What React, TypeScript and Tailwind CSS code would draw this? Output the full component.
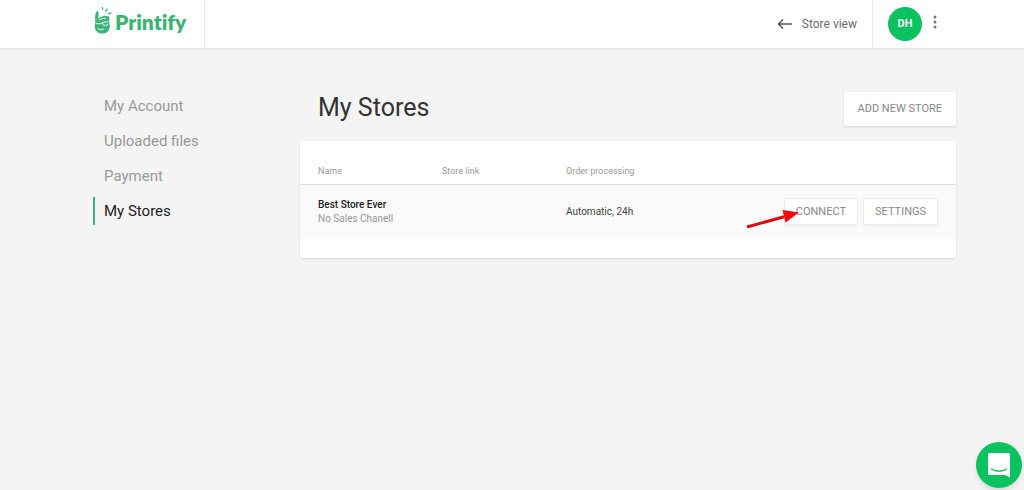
import React from "react";

const navItems = [
  { label: "My Account", active: false },
  { label: "Uploaded files", active: false },
  { label: "Payment", active: false },
  { label: "My Stores", active: true },
];

const stores = [
  { name: "Best Store Ever", channel: "No Sales Chanell", link: "", processing: "Automatic, 24h" },
];

function HandLogo() {
  return (
    <svg viewBox="0 0 18 28" className="h-7 w-[18px] shrink-0" aria-hidden="true">
      <g fill="#39b575">
        <path d="M2.200 6C2.900 4.900 4.600 5.300 4.600 6.700l-.2 5.200-3.300 2C.9 11 1.200 8 2.200 6z" />
        <path d="M1.200 14.600C3.200 12.300 7 10.500 10 9.900c2.800-.5 5.300.4 5.500 2.100.2 1-.3 1.700-.8 2.200 1 .9 1.100 2 .6 3 1.600 5-.8 9.700-6 10.300C4.600 28 1.100 25.200.700 20.800z" />
      </g>
      <g fill="none" stroke="#39b575" strokeWidth="1.200" strokeLinecap="round">
        <path d="M8.200 1.500l.5 2.200M13.200 2.900l-1.700 2.200M17.200 7l-2.600.9" />
      </g>
      <g fill="none" stroke="#fff" strokeWidth="0.900" strokeLinecap="round">
        <path d="M5.500 13.800c2-1.200 3.900-1.700 6-1.500M1.500 16.600c1.800 1.500 3.900 1.700 6 .5 2.200-1 4.500-1.500 6.800-1.200M8.600 16.900c-.5 1.800.6 2.500 2.200 2.500 1.300 0 2.300-.4 3.200-1M4 22.600c1.800 1.300 3.800 1.500 5.600.4" />
      </g>
    </svg>
  );
}

function Header() {
  return (
    <header className="flex h-[49px] border-b border-[#e4e4e4] bg-white pl-[94px] pr-[68px] shadow-xs">
      <a href="#home" className="flex items-center border-r border-[#ececec] pr-[18px] text-[#39b575]">
        <span className="flex items-center gap-[3px] pb-2">
          <HandLogo />
          <span className="pt-1 font-[Lato,sans-serif] text-[21px] leading-6 font-extrabold [font-variant-ligatures:none]">
            Printify
          </span>
        </span>
      </a>
      <div className="ml-auto flex">
        <a href="#store" className="flex items-center gap-[9px] border-r border-[#ececec] pr-[15px] text-xs text-[#6b6b6b]">
          <svg viewBox="0 0 16 12" className="h-3 w-4" fill="none" stroke="#555" strokeWidth="1.500" aria-hidden="true">
            <path d="M15 6H2M6 1.500L1.500 6 6 10.500" />
          </svg>
          Store view
        </a>
        <div className="flex items-center gap-2 pr-4 pl-[15px]">
          <span className="flex size-[34px] items-center justify-center rounded-full bg-[#0ac25f] text-[11px] font-bold text-white">
            DH
          </span>
          <button type="button" aria-label="More options" className="pb-1">
            <svg viewBox="0 0 10 14" className="h-3.5 w-2.5" fill="#777" aria-hidden="true">
              <circle cx="5" cy="2" r="1.500" />
              <circle cx="5" cy="7" r="1.500" />
              <circle cx="5" cy="12" r="1.500" />
            </svg>
          </button>
        </div>
      </div>
    </header>
  );
}

function Sidebar() {
  return (
    <nav className="w-[207px] shrink-0">
      <ul className="flex flex-col gap-[7px]">
        {navItems.map((item) => (
          <li key={item.label}>
            <a
              href="#section"
              aria-current={item.active ? "page" : undefined}
              className={
                item.active
                  ? "block border-l-2 border-[#39b575] pl-[9px] text-[15px] leading-7 text-[#222]"
                  : "block border-l-2 border-transparent pl-[9px] text-[15px] leading-7 text-[#999]"
              }
            >
              {item.label}
            </a>
          </li>
        ))}
      </ul>
    </nav>
  );
}

function PointerArrow() {
  return (
    <svg viewBox="0 0 54 22" className="pointer-events-none absolute top-3 -left-[39px] h-[22px] w-[54px]" aria-hidden="true">
      <path d="M2 17L39 6.800" stroke="#dc0d12" strokeWidth="3" />
      <path d="M37.500 0L54 2.500 40.500 12.500z" fill="#f5080c" />
    </svg>
  );
}

const rowButton =
  "h-[27px] rounded-xs border border-[#ececec] bg-white px-[11px] text-[11px] text-[#888] shadow-xs";

function StoreTable() {
  return (
    <section className="rounded-xs bg-white pb-[19px] shadow-sm">
      <table className="w-full table-fixed text-left">
        <thead>
          <tr className="h-[43px] border-b border-[#dedede] text-[9px] text-[#999]">
            <th className="w-[142px] pt-[18px] pl-[18px] font-normal">Name</th>
            <th className="w-[124px] pt-[18px] font-normal">Store link</th>
            <th className="w-[124px] pt-[18px] font-normal">Order processing</th>
            <th aria-label="Actions" />
          </tr>
        </thead>
        <tbody>
          {stores.map((store) => (
            <tr key={store.name} className="h-[55px] bg-[#fafafa] text-[10px]">
              <td className="pl-[18px] leading-[14px]">
                <div className="font-medium text-[#222]">{store.name}</div>
                <div className="text-[#999]">{store.channel}</div>
              </td>
              <td>{store.link}</td>
              <td className="text-[#444]">{store.processing}</td>
              <td className="pr-[18px]">
                <div className="flex justify-end gap-[5px]">
                  <div className="relative">
                    <button type="button" className={rowButton}>CONNECT</button>
                    <PointerArrow />
                  </div>
                  <button type="button" className={rowButton}>SETTINGS</button>
                </div>
              </td>
            </tr>
          ))}
        </tbody>
      </table>
    </section>
  );
}

export default function App() {
  return (
    <div className="min-h-screen bg-[#f4f4f4] font-[Roboto,sans-serif]">
      <Header />
      <div className="flex pt-[43px] pl-[93px] pr-[68px] pb-11">
        <Sidebar />
        <main className="min-w-0 flex-1">
          <div className="mb-[15px] flex items-start justify-between">
            <h1 className="pl-[18px] text-[25px] leading-8 text-[#333]">My Stores</h1>
            <button type="button" className="h-[34px] rounded-xs bg-white px-3.5 text-[11px] text-[#888] shadow-sm">
              ADD NEW STORE
            </button>
          </div>
          <StoreTable />
        </main>
      </div>
      <button
        type="button"
        aria-label="Open chat"
        className="fixed right-0.5 bottom-0.5 flex size-[46px] items-center justify-center rounded-full bg-[#0ac25f] shadow-md"
      >
        <svg viewBox="0 0 24 26" className="h-[26px] w-6" aria-hidden="true">
          <path d="M2.500 1h19A1.500 1.500 0 0 1 23 2.500V25.500l-5-2.500H2.500A1.500 1.500 0 0 1 1 21.500v-19A1.500 1.500 0 0 1 2.500 1z" fill="#fff" />
          <path d="M4.500 17c4 3 11 3 15 0" fill="none" stroke="#0ac25f" strokeWidth="1.300" strokeLinecap="round" />
        </svg>
      </button>
    </div>
  );
}
